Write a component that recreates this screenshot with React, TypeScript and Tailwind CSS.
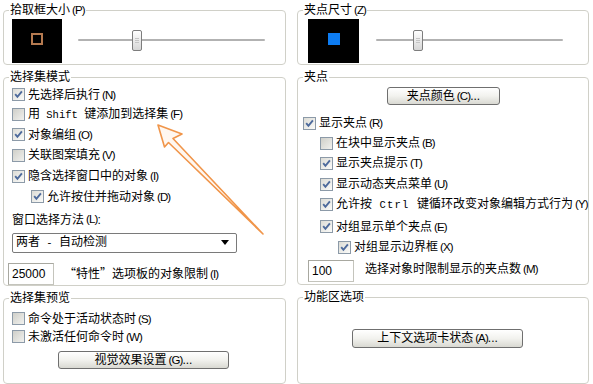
import React from "react";

const FONT = "font-['Liberation_Sans','Noto_Sans_CJK_SC',sans-serif]";

function Mn({ k }: { k: string }) {
  return (
    <span className="font-['Liberation_Sans',sans-serif] text-[11.5px] tracking-[-0.9px] ml-[2px]">({k})</span>
  );
}

function Mono({ t, className = "" }: { t: string; className?: string }) {
  return <span className={`font-['Liberation_Mono',monospace] text-[10.5px] whitespace-pre ${className}`}>{t}</span>;
}

function Cjk({ t }: { t: string }) {
  return <span className="font-['Noto_Sans_CJK_SC',sans-serif]">{t}</span>;
}

function Box({ checked }: { checked: boolean }) {
  return (
    <span
      className={
        checked
          ? "relative block w-[13px] h-[13px] shrink-0 border border-[#8c9aa8] bg-linear-to-br from-[#dcdcd6] to-[#fbfbf9]"
          : "relative block w-[13px] h-[13px] shrink-0 border border-[#8c9aa8] bg-linear-to-br from-[#cfcfc9] to-[#f1f1ee]"
      }
    >
      {checked && (
        <svg className="absolute left-0 top-0" width="11" height="11" viewBox="0 0 11 11">
          <path d="M2.2 5.2 L4.4 7.8 L8.9 2.4" fill="none" stroke="#4d6a9c" strokeWidth="1.9" />
        </svg>
      )}
    </span>
  );
}

function Row({
  checked,
  children,
  className,
}: {
  checked: boolean;
  children: React.ReactNode;
  className: string;
}) {
  return (
    <div className={`flex items-center whitespace-nowrap ${className}`}>
      <Box checked={checked} />
      <span className="ml-[3px] leading-[16px]">{children}</span>
    </div>
  );
}

function Group({
  title,
  className,
  children,
}: {
  title: React.ReactNode;
  className: string;
  children?: React.ReactNode;
}) {
  return (
    <div className={`relative border border-[#d0d0c8] rounded-[4px] ${className}`}>
      <span className="absolute left-[5px] top-[-10px] bg-white px-[1px] leading-[18px] whitespace-nowrap">
        {title}
      </span>
      {children}
    </div>
  );
}

function Slider({ pos, className }: { pos: string; className: string }) {
  return (
    <div className={`relative w-[187px] h-[47px] ${className}`}>
      <div className="absolute left-0 right-0 top-[23px] h-[2px] rounded-full bg-[#b2b2b2]" />
      <div
        className={`absolute top-[14px] w-[10px] h-[21px] rounded-[2px] border border-[#7d7d7d] bg-linear-to-b from-white to-[#d6d6d6] ${pos}`}
      >
        <div className="mx-auto mt-[7px] w-[4px] h-[1px] bg-[#c4c4c4]" />
        <div className="mx-auto mt-[1px] w-[4px] h-[1px] bg-[#c4c4c4]" />
        <div className="mx-auto mt-[1px] w-[4px] h-[1px] bg-[#c4c4c4]" />
      </div>
    </div>
  );
}

function Button({ children, className }: { children: React.ReactNode; className: string }) {
  return (
    <div
      className={`flex items-center justify-center rounded-[3px] border border-[#6f6f6f] bg-linear-to-b from-white via-[#f2f2ee] to-[#d9d9d2] whitespace-nowrap ${className}`}
    >
      <span className="leading-[16px]">{children}</span>
    </div>
  );
}

function Input({ value, className }: { value: string; className: string }) {
  return (
    <div
      className={`flex items-center w-[46px] h-[22px] border border-[#c4c4bc] border-t-[#a8a8a0] border-l-[#a8a8a0] pl-[3px] font-['Liberation_Sans',sans-serif] text-[12px] ${className}`}
    >
      {value}
    </div>
  );
}

export default function App() {
  return (
    <div className={`relative w-[593px] h-[384px] overflow-hidden bg-white text-black text-[12px] ${FONT} flex`}>
      {/* Left column */}
      <div className="ml-[3px] w-[283px] pt-[10px] flex flex-col shrink-0">
        <Group
          className="h-[57px]"
          title={
            <>
              拾取框大小<Mn k="P" />
            </>
          }
        >
          <div className="flex items-start pt-[5px] pl-[8px]">
            <div className="w-[50px] h-[47px] bg-black flex items-center justify-center">
              <div className="w-[12px] h-[12px] border-2 border-[#b57a50] mt-[-2px]" />
            </div>
            <Slider pos="left-[54px]" className="ml-[16px]" />
          </div>
        </Group>

        <Group className="mt-[12px] h-[214px]" title="选择集模式">
          <div className="flex flex-col pt-[7px] pl-[8px]">
            <Row checked className="h-[20px]">
              先选择后执行<Mn k="N" />
            </Row>
            <Row checked={false} className="h-[20px]">
              用<Mono t=" Shift " />键添加到选择集<Mn k="F" />
            </Row>
            <Row checked className="h-[20px]">
              对象编组<Mn k="O" />
            </Row>
            <Row checked={false} className="h-[21px]">
              关联图案填充<Mn k="V" />
            </Row>
            <Row checked className="h-[21px]">
              隐含选择窗口中的对象<Mn k="I" />
            </Row>
            <Row checked className="h-[20px] pl-[19px]">
              允许按住并拖动对象<Mn k="D" />
            </Row>
            <div className="mt-[3px] h-[20px] flex items-center whitespace-nowrap">
              窗口选择方法<Mn k="L" />:
            </div>
            <div className="mt-[3px] h-[20px] w-[225px] flex items-center justify-between rounded-[2px] border border-[#7a7a7a] pl-[3px] pr-[7px] whitespace-nowrap">
              <span>
                两者<Mono t=" - " />自动检测
              </span>
              <svg width="8" height="5" viewBox="0 0 8 5">
                <path d="M0 0 H8 L4 5 Z" fill="#000" />
              </svg>
            </div>
          </div>
          <div className="mt-[10px] ml-[4px] flex items-center whitespace-nowrap">
            <Input value="25000" className="" />
            <span className="ml-[10px]">
              <Cjk t="“" />特性<Cjk t="”" />选项板的对象限制<Mn k="I" />
            </span>
          </div>
        </Group>

        <Group className="mt-[12px] h-[90px]" title="选择集预览">
          <div className="flex flex-col pt-[11px] pl-[8px]">
            <Row checked={false} className="h-[18px]">
              命令处于活动状态时<Mn k="S" />
            </Row>
            <Row checked={false} className="h-[18px]">
              未激活任何命令时<Mn k="W" />
            </Row>
          </div>
          <Button className="mt-[5px] ml-[54px] w-[171px] h-[18px]">
            视觉效果设置<Mn k="G" />...
          </Button>
        </Group>
      </div>

      {/* Right column */}
      <div className="ml-[11px] w-[292px] pt-[10px] flex flex-col shrink-0">
        <Group
          className="h-[57px]"
          title={
            <>
              夹点尺寸<Mn k="Z" />
            </>
          }
        >
          <div className="flex items-start pt-[5px] pl-[10px]">
            <div className="w-[51px] h-[47px] bg-black flex items-center justify-center">
              <div className="w-[12px] h-[12px] bg-[#0d7cf2] mt-[-1px]" />
            </div>
            <Slider pos="left-[37px]" className="ml-[17px]" />
          </div>
        </Group>

        <Group className="mt-[12px] h-[214px]" title="夹点">
          <Button className="mt-[9px] ml-[89px] w-[113px] h-[18px]">
            夹点颜色<Mn k="C" />...
          </Button>
          <div className="flex flex-col mt-[8px] pl-[5px]">
            <Row checked className="h-[20px]">
              显示夹点<Mn k="R" />
            </Row>
            <Row checked={false} className="h-[20px] pl-[17px]">
              在块中显示夹点<Mn k="B" />
            </Row>
            <Row checked className="h-[20px] pl-[17px]">
              显示夹点提示<Mn k="T" />
            </Row>
            <Row checked className="mt-[1px] h-[20px] pl-[17px]">
              显示动态夹点菜单<Mn k="U" />
            </Row>
            <Row checked className="h-[20px] pl-[17px]">
              允许按<Mono t=" Ctrl " className="tracking-[1.2px]" />键循环改变对象编辑方式行为<Mn k="Y" />
            </Row>
            <Row checked className="mt-[2px] h-[21px] pl-[17px]">
              对组显示单个夹点<Mn k="E" />
            </Row>
            <Row checked className="h-[20px] pl-[35px]">
              对组显示边界框<Mn k="X" />
            </Row>
          </div>
          <div className="mt-[3px] ml-[10px] flex items-center whitespace-nowrap">
            <Input value="100" className="" />
            <span className="ml-[11px] mt-[-4px]">
              选择对象时限制显示的夹点数<Mn k="M" />
            </span>
          </div>
        </Group>

        <Group className="mt-[12px] h-[90px]" title="功能区选项">
          <Button className="mt-[31px] ml-[54px] w-[171px] h-[19px]">
            上下文选项卡状态<Mn k="A" />...
          </Button>
        </Group>
      </div>

      {/* Annotation arrow */}
      <svg className="absolute left-0 top-0 pointer-events-none" width="593" height="384" viewBox="0 0 593 384">
        <polygon
          points="158,125 182,134 173,138.5 263,234 168.5,142.5 164.5,147"
          fill="#fff7f0"
          stroke="#f0954a"
          strokeWidth="1.6"
          strokeLinejoin="round"
        />
      </svg>
    </div>
  );
}
